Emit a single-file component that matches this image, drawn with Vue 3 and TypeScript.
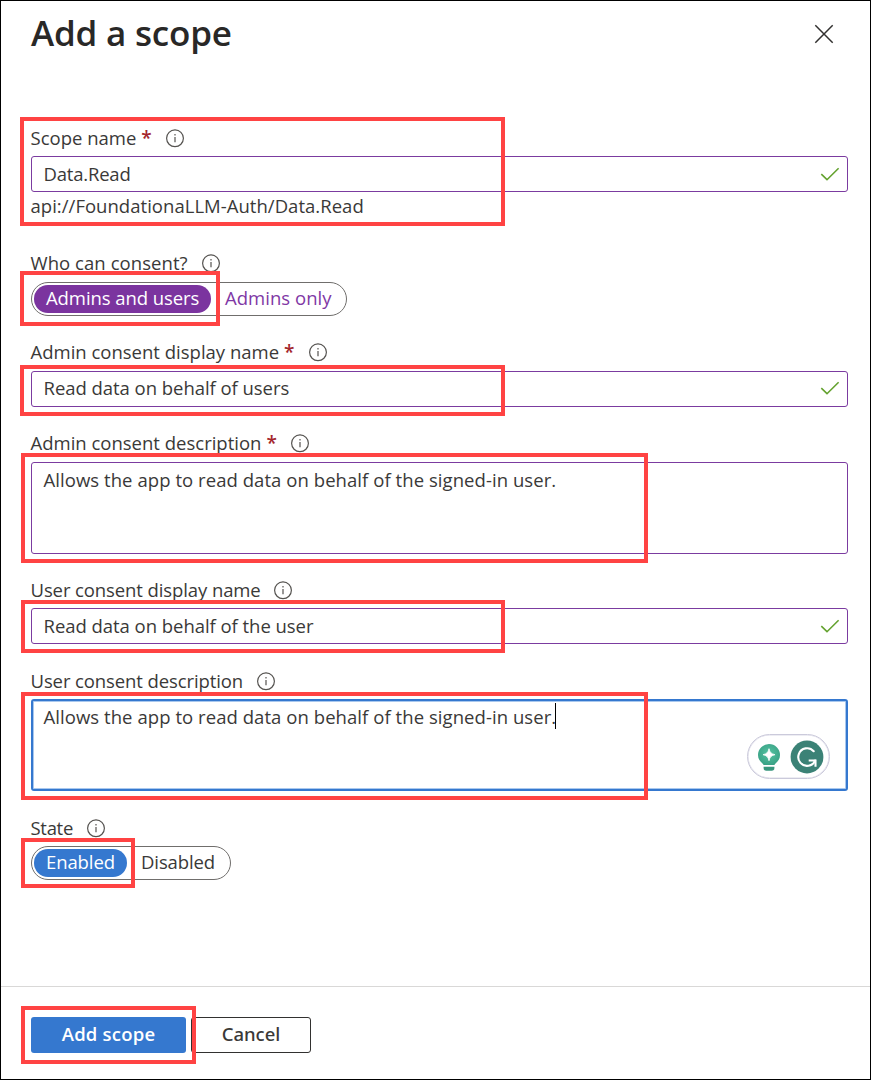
<script setup lang="ts">
import { ref } from 'vue'

interface Field {
  id: string
  label: string
  required?: boolean
  kind: 'input' | 'textarea' | 'toggle'
  value?: string
  options?: string[]
  note?: string
  focused?: boolean
}

const fields: Field[] = [
  { id: 'scope', label: 'Scope name', required: true, kind: 'input', value: 'Data.Read', note: 'api://FoundationaLLM-Auth/Data.Read' },
  { id: 'who', label: 'Who can consent?', kind: 'toggle', options: ['Admins and users', 'Admins only'] },
  { id: 'admin-name', label: 'Admin consent display name', required: true, kind: 'input', value: 'Read data on behalf of users' },
  { id: 'admin-desc', label: 'Admin consent description', required: true, kind: 'textarea', value: 'Allows the app to read data on behalf of the signed-in user.' },
  { id: 'user-name', label: 'User consent display name', kind: 'input', value: 'Read data on behalf of the user' },
  { id: 'user-desc', label: 'User consent description', kind: 'textarea', value: 'Allows the app to read data on behalf of the signed-in user.', focused: true },
  { id: 'state', label: 'State', kind: 'toggle', options: ['Enabled', 'Disabled'] },
]

const selected = ref<Record<string, number>>({ who: 0, state: 0 })
</script>

<template>
  <main class="panel">
    <header class="header">
      <h1>Add a scope</h1>
      <button class="close" aria-label="Close">
        <svg width="20" height="20" viewBox="0 0 20 20"><path d="M1.3 1.3 18.7 18.7M18.7 1.3 1.3 18.7" /></svg>
      </button>
    </header>

    <form class="form" @submit.prevent>
      <section v-for="f in fields" :key="f.id" class="field" :class="f.id">
        <div class="label">
          <span class="label-text">{{ f.label }}</span>
          <span v-if="f.required" class="star">*</span>
          <svg class="info" width="20" height="20" viewBox="0 0 20 20">
            <circle cx="10" cy="10.3" r="8.4" />
            <path d="M10 8.9v5.300M10 6v1.500" />
          </svg>
        </div>

        <div v-if="f.kind === 'toggle'" class="toggle">
          <button
            v-for="(o, i) in f.options"
            :key="o"
            class="option"
            :class="{ on: selected[f.id] === i }"
            @click="selected[f.id] = i"
          >{{ o }}</button>
        </div>

        <div v-else class="box" :class="[f.kind, { focused: f.focused }]">
          <span class="value">{{ f.value }}</span><i v-if="f.focused" class="caret"></i>
          <svg v-if="f.kind === 'input'" class="check" width="20" height="16" viewBox="0 0 20 16">
            <path d="M1.3 8.2 7 13.7 18.6 2.2" />
          </svg>
          <div v-if="f.focused" class="assist">
            <svg width="26" height="30" viewBox="0 0 26 30">
              <defs>
                <radialGradient id="bulb" cx="0.5" cy="0.45" r="0.6">
                  <stop offset="0" stop-color="#55c3a2" />
                  <stop offset="1" stop-color="#38a084" />
                </radialGradient>
              </defs>
              <path d="M13 2a11 11 0 0 0-11 11c0 4 2 6.200 4 8 .8.700 1.200 1.200 1.600 1.900h10.800c.4-.7.8-1.200 1.600-1.900 2-1.800 4-4 4-8a11 11 0 0 0-11-11Z" fill="url(#bulb)" />
              <path d="M13 6.700c.9 3.900 2.200 5.100 6 6-3.800.9-5.100 2.100-6 6-.9-3.900-2.200-5.100-6-6 3.800-.9 5.100-2.100 6-6Z" fill="#fff" stroke="#fff" stroke-width="0.8" />
              <path d="M7.600 24.800h10.800v1.200a2.700 2.700 0 0 1-2.700 2.700h-5.400a2.700 2.700 0 0 1-2.700-2.700Z" fill="#38967d" />
            </svg>
            <svg width="34" height="34" viewBox="0 0 34 34">
              <circle cx="17" cy="17" r="16.400" fill="#3b8276" />
              <path d="M23.700 11.200A8.800 8.800 0 1 0 18.500 25.700C21.600 25.200 24 23.400 25 20.500" fill="none" stroke="#fff" stroke-width="2.100" stroke-linecap="round" />
              <path d="M18.700 20.500H25.500V26.800" fill="none" stroke="#fff" stroke-width="2.100" />
            </svg>
          </div>
        </div>

        <div v-if="f.note" class="note">{{ f.note }}</div>
        <div class="mark"></div>
      </section>
    </form>

    <footer class="footer">
      <button class="btn primary">Add scope</button>
      <button class="btn secondary">Cancel</button>
      <div class="mark"></div>
    </footer>
  </main>
</template>

<style>
body { margin: 0; background: #fff; }
</style>

<style scoped>
* { box-sizing: border-box; }
.panel {
  display: flex;
  flex-direction: column;
  width: 871px;
  height: 1080px;
  border: 1px solid #000;
  background: #fff;
  color: #3a3938;
  font: 18.5px/26px "Open Sans", "Noto Sans", sans-serif;
}
button { font: inherit; color: inherit; margin: 0; padding: 0; border: 0; background: none; white-space: nowrap; }
.header { display: flex; justify-content: space-between; height: 124px; padding: 7px 36px 0 30px; }
h1 { margin: 0; font-size: 35px; line-height: 50px; font-weight: 600; letter-spacing: -0.2px; color: #292827; }
.close { width: 20px; height: 20px; margin-top: 16px; }
.close svg { display: block; fill: none; stroke: #323130; stroke-width: 1.5; }
.form { flex: 1; padding: 0 22px 0 30px; }
.field { position: relative; display: flex; flex-direction: column; align-items: flex-start; gap: 5px; }
.scope { height: 125px; }
.who { height: 89px; }
.admin-name { height: 91px; }
.admin-desc { height: 147px; }
.user-name { height: 91px; }
.user-desc { height: 147px; }
.state { height: 80px; }
.who, .admin-name, .admin-desc { gap: 6px; }
.label { display: flex; align-items: center; height: 26px; }
.label-text { margin-left: -0.5px; letter-spacing: 0; }
.star { margin-left: 5px; color: #a4262c; font-weight: 600; font-size: 19px; }
.info { display: block; margin-left: 13.3px; fill: none; stroke: #555350; stroke-width: 1.2; }
.who .label-text { letter-spacing: 0.06px; }
.user-name .label-text, .user-desc .label-text { letter-spacing: -0.1px; }
.user-name .info { margin-left: 12.2px; }
.user-desc .info { margin-left: 13px; margin-top: -1px; }
.state .label-text { letter-spacing: -0.3px; }
.state .info { margin-left: 13px; margin-top: -1px; }
.box {
  position: relative;
  display: flex;
  width: 817px;
  border: 1px solid #7b3ba0;
  border-radius: 3px;
  padding: 4px 7px 4px 11.5px;
}
.input { height: 36px; align-items: center; justify-content: space-between; }
.input .value { letter-spacing: -0.04px; }
.scope .value { letter-spacing: -0.2px; }
.admin-name .value { margin-top: -2px; }
.admin-name .check { margin-top: -2px; }
.textarea { height: 92px; }
.textarea .value { letter-spacing: 0.06px; }
.check { fill: none; stroke: #64a22f; stroke-width: 1.6; }
.focused { border: 2px solid #3578cf; box-shadow: inset 0 0 0 1px #a9c8ee; padding: 3px 10.5px; }
.caret { width: 1px; height: 26px; margin: -1px 0 0 -1px; background: #000; }
.assist {
  position: absolute;
  right: 16px;
  bottom: 10px;
  display: flex;
  align-items: center;
  gap: 8px;
  width: 83px;
  height: 45px;
  padding-left: 7.5px;
  border: 1px solid #cbcadb;
  border-radius: 23px;
  background: #fff;
  box-shadow: inset 0 0 0 0.5px #dcdbe8;
}
.note { margin: -4px 0 0 -0.5px; letter-spacing: 0.03px; }
.toggle { display: flex; height: 34px; border: 1px solid #706e6c; border-radius: 17px; padding: 2px; }
.option { height: 28px; line-height: 26px; padding: 0 0 2px 12px; border-radius: 14px; text-align: left; }
.option + .option { padding-left: 14px; }
.who .option { width: 177px; padding-bottom: 3px; letter-spacing: -0.08px; }
.who .option + .option { width: 133px; color: #8038a5; letter-spacing: 0.03px; }
.state .option { width: 93px; letter-spacing: -0.1px; }
.state .option + .option { width: 101px; }
.who .on { background: #7b349f; color: #fff; }
.state .on { background: #3578cf; color: #fff; }
.mark { position: absolute; border: 4px solid #ff4343; pointer-events: none; }
.scope .mark { left: -11px; top: -8px; width: 485px; height: 109px; }
.who .mark { left: -11px; top: 21px; width: 200px; height: 55px; }
.admin-name .mark { left: -11px; top: 26px; width: 485px; height: 51px; }
.admin-desc .mark { left: -10px; top: 23px; width: 627px; height: 110px; }
.user-name .mark { left: -10px; top: 23px; width: 484px; height: 53px; }
.user-desc .mark { left: -10px; top: 24px; width: 627px; height: 108px; }
.state .mark { left: -10px; top: 23px; width: 114px; height: 50px; }
.footer { position: relative; display: flex; gap: 5px; height: 93px; padding: 30px 30px 0; border-top: 1px solid #d9d8d7; }
.btn { height: 36px; border-radius: 3px; padding-bottom: 2px; }
.primary { width: 155px; background: #3578cf; color: #fff; font-weight: 600; letter-spacing: 0.2px; }
.secondary { width: 120px; border: 1px solid #323130; font-family: "Noto Sans", sans-serif; font-weight: 500; }
.footer .mark { left: 20px; top: 19px; width: 175px; height: 58px; }
</style>
